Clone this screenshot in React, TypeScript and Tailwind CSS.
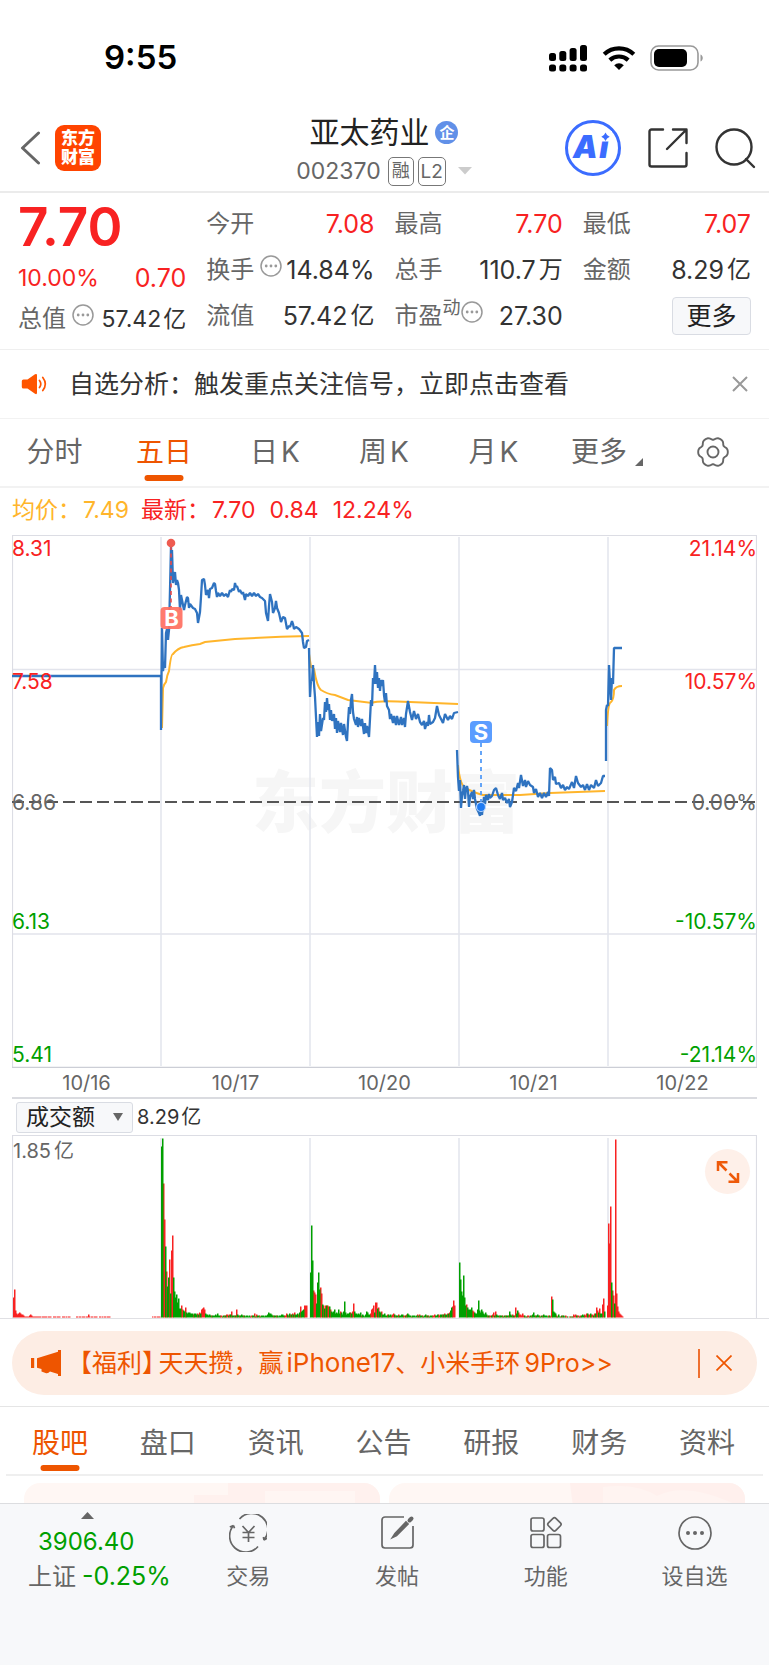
import React from "react";

const MORE = "shrink-0 text-[#999]";

function DotsCircle({ className = "" }: { className?: string }) {
  return (
    <svg viewBox="0 0 22 22" className={`h-[22px] w-[22px] ${MORE} ${className}`} fill="none" stroke="currentColor" strokeWidth="1.5">
      <circle cx="11" cy="11" r="10" />
      <g fill="currentColor" stroke="none">
        <circle cx="6.2" cy="11" r="1.4" />
        <circle cx="11" cy="11" r="1.4" />
        <circle cx="15.8" cy="11" r="1.4" />
      </g>
    </svg>
  );
}

function StatusBar() {
  return (
    <div className="flex h-[106px] items-center justify-between pt-[9px] pr-[65px] pl-[104px] text-black">
      <span className="text-[33px] leading-none font-semibold">9:55</span>
      <div className="flex items-center gap-[14px]">
        <svg viewBox="0 0 40 28" className="h-7 w-10" fill="currentColor">
          <rect x="1" y="9" width="7" height="8" rx="2.5" />
          <rect x="11.3" y="7" width="7" height="10" rx="2.5" />
          <rect x="21.6" y="4" width="7" height="13" rx="2.5" />
          <rect x="32" y="1" width="7" height="16" rx="2.5" />
          <rect x="1" y="20.5" width="7" height="7" rx="2.5" />
          <rect x="11.3" y="20.5" width="7" height="7" rx="2.5" />
          <rect x="21.6" y="20.5" width="7" height="7" rx="2.5" />
          <rect x="32" y="20.5" width="7" height="7" rx="2.5" />
        </svg>
        <svg viewBox="0 0 34 26" className="h-[26px] w-[34px]" fill="none" stroke="currentColor" strokeWidth="4.2">
          <path d="M2.2 9.3a21.5 21.5 0 0 1 29.6 0" />
          <path d="M7.8 15.1a13.5 13.5 0 0 1 18.4 0" />
          <path d="M17 25l-4.8-4.8a7 7 0 0 1 9.6 0z" fill="currentColor" stroke="none" />
        </svg>
        <svg viewBox="0 0 54 26" className="h-[26px] w-[54px]">
          <rect x="1" y="1" width="47" height="24" rx="7.5" fill="none" stroke="#999" strokeWidth="1.6" />
          <rect x="4" y="4" width="33" height="18" rx="5" fill="currentColor" />
          <path d="M50.5 9.5c3 1.200 3 5.800 0 7z" fill="#999" />
        </svg>
      </div>
    </div>
  );
}

function Header() {
  return (
    <header className="grid h-[87px] grid-cols-[1fr_auto_1fr] items-center border-b-2 border-[#ebebeb] pr-[13px] pb-[3px] pl-5">
      <div className="flex items-center gap-[14px]">
        <button aria-label="返回">
          <svg viewBox="0 0 21 34" className="h-[34px] w-[21px]" fill="none" stroke="#666" strokeWidth="3" strokeLinecap="round" strokeLinejoin="round">
            <path d="M18.5 2L2.5 17l16 15" />
          </svg>
        </button>
        <a href="#home" className="flex h-[46px] w-[46px] flex-col items-center justify-center rounded-[9px] bg-[#ff4400] text-[17px] leading-[19px] font-black text-white">
          <span>东方</span>
          <span>财富</span>
        </a>
      </div>
      <div className="flex flex-col items-center pt-[6px] pr-2">
        <h1 className="flex items-center gap-[6px] text-[30px] leading-[40px] text-[#222]">
          亚太药业
          <span className="flex h-[23px] w-[23px] items-center justify-center rounded-full bg-[#6190e8] text-[15px] leading-none font-bold text-white">企</span>
        </h1>
        <div className="flex h-[38px] items-center gap-1 text-[#666]">
          <span className="mr-[3px] text-[23px] leading-none">002370</span>
          <span className="flex h-[29px] w-[26px] items-center justify-center rounded-[5px] border border-[#777] text-[18px] leading-none">融</span>
          <span className="flex h-[29px] w-[28px] items-center justify-center rounded-[5px] border border-[#777] text-[19px] leading-none">L2</span>
          <svg viewBox="0 0 14 8" className="ml-2 h-2 w-[14px]" fill="#ccc">
            <path d="M0 0h14L7 7.5z" />
          </svg>
        </div>
      </div>
      <div className="flex items-center justify-end gap-[27px]">
        <button aria-label="Ai">
          <svg viewBox="0 0 56 56" className="h-14 w-14">
            <circle cx="28" cy="28" r="26.5" fill="#fff" stroke="#3b6cff" strokeWidth="3" />
            <text x="8" y="38" fill="#3b6cff" className="font-[Inter] text-[31px] font-black italic">
              A<tspan dx="1.5">i</tspan>
            </text>
            <path d="M34 11h13v10.500h-13z" fill="#fff" />
            <path d="M40.500 12.500q1 3 4.200 4.200q-3.200 1.200-4.200 4.200q-1-3-4.200-4.200q3.200-1.200 4.200-4.200z" fill="#3b6cff" />
          </svg>
        </button>
        <button aria-label="分享">
          <svg viewBox="0 0 40 40" className="h-10 w-10" fill="none" stroke="#333" strokeWidth="2.4" strokeLinecap="round" strokeLinejoin="round">
            <path d="M15 1.500H3.500a2 2 0 0 0-2 2v33a2 2 0 0 0 2 2h33a2 2 0 0 0 2-2V25" />
            <path d="M25 1.500h13.500V15M38 2L19 21" />
          </svg>
        </button>
        <button aria-label="搜索">
          <svg viewBox="0 0 41 41" className="h-[41px] w-[41px]" fill="none" stroke="#333" strokeWidth="2.4" strokeLinecap="round">
            <circle cx="19" cy="19" r="17.5" />
            <path d="M31 31l8 8" />
          </svg>
        </button>
      </div>
    </header>
  );
}

function Cell({ label, value, unit, red, info, sup }: { label: string; value: string; unit?: string; red?: boolean; info?: boolean; sup?: string }) {
  return (
    <div className="flex h-[46px] items-center justify-between whitespace-nowrap">
      <span className="flex items-center text-[24px] text-[#666]">
        {label}
        {sup && <span className="mb-4 text-[18px] leading-none">{sup}</span>}
        {info && <DotsCircle className={sup ? "mb-2" : "mb-2 ml-[6px]"} />}
      </span>
      <span className={`flex items-center gap-[3px] text-[25px] ${red ? "text-[#f82222]" : "text-[#333]"}`}>
        {value}
        {unit && <span className="text-[24px]">{unit}</span>}
      </span>
    </div>
  );
}

function Quote() {
  return (
    <section className="grid grid-cols-4 gap-x-5 border-b border-[#efefef] px-[18px] pt-2 pb-[10px]">
      <div className="whitespace-nowrap">
        <div className="flex h-[53px] items-center text-[53px] leading-none font-semibold text-[#f82222]">7.70</div>
        <div className="flex h-[48px] items-center justify-between text-[#f82222]">
          <span className="text-[23px]">10.00%</span>
          <span className="text-[25px]">0.70</span>
        </div>
        <div className="flex h-[34px] items-center justify-between text-[#333]">
          <span className="flex items-center text-[24px] text-[#666]">
            总值
            <DotsCircle className="mb-2 ml-[6px]" />
          </span>
          <span className="flex items-center gap-[2px] text-[23px]">
            57.42<span>亿</span>
          </span>
        </div>
      </div>
      <div>
        <Cell label="今开" value="7.08" red />
        <Cell label="换手" value="14.84%" info />
        <Cell label="流值" value="57.42" unit="亿" />
      </div>
      <div>
        <Cell label="最高" value="7.70" red />
        <Cell label="总手" value="110.7" unit="万" />
        <Cell label="市盈" value="27.30" sup="动" info />
      </div>
      <div>
        <Cell label="最低" value="7.07" red />
        <Cell label="金额" value="8.29" unit="亿" />
        <div className="flex h-[46px] items-center justify-end">
          <button className="h-[38px] w-[79px] rounded border border-[#d9dce3] bg-[#f7f8fa] text-[25px] leading-none text-[#222]">更多</button>
        </div>
      </div>
    </section>
  );
}

function Notice() {
  return (
    <div className="flex h-[69px] items-center border-b border-[#f2f2f2] pr-[21px] pl-[21px]">
      <svg viewBox="0 0 27 22" className="h-[22px] w-[27px]" fill="#ff5500">
        <path d="M2.5 6.500h4L14 1.300q2-1.200 2 1v17.500q0 2-2 1L6.500 15.500h-4Q.8 15.500.8 14V8q0-1.500 1.700-1.500z" />
        <path d="M18.500 7.500q2.600 3.500 0 7M21.800 4.500q5 6.500 0 13" fill="none" stroke="#ff5500" strokeWidth="1.7" strokeLinecap="round" />
      </svg>
      <a href="#analysis" className="ml-[21px] flex-1 text-[25px] text-[#333]">自选分析：触发重点关注信号，立即点击查看</a>
      <button aria-label="关闭">
        <svg viewBox="0 0 16 16" className="h-4 w-4" stroke="#999" strokeWidth="2">
          <path d="M1 1l14 14M15 1L1 15" />
        </svg>
      </button>
    </div>
  );
}

const gearPath =
  Array.from({ length: 73 }, (_, i) => {
    const a = (i * 5 * Math.PI) / 180;
    const r = 13.8 + 1.3 * Math.cos(6 * a) - 0.3 * Math.cos(12 * a);
    return `${i ? "L" : "M"}${(16 + r * Math.cos(a)).toFixed(2)} ${(16 + r * Math.sin(a)).toFixed(2)}`;
  }).join("") + "Z";

const periods = [
  { a: "分时", w: "w-[109px]" },
  { a: "五日", w: "w-[110px]", on: true },
  { a: "日", k: true, w: "w-[112px]" },
  { a: "周", k: true, w: "w-[106px]" },
  { a: "月", k: true, w: "w-[113px]" },
];

function Periods() {
  return (
    <nav className="flex h-[69px] items-center border-b-2 border-[#f2f2f2] text-[28px] text-[#666]">
      {periods.map((p) => (
        <button key={p.a} className={`relative flex h-full items-center justify-center gap-[3px] pb-[2px] ${p.w} ${p.on ? "text-[#ee5500]" : ""}`}>
          {p.a}
          {p.k && <span>K</span>}
          {p.on && <span className="absolute bottom-[5px] left-1/2 h-[6px] w-[39px] -translate-x-1/2 rounded-full bg-[#ee5500]" />}
        </button>
      ))}
      <button className="flex h-full w-[114px] items-center justify-center gap-[8px] pb-[2px]">
        更多
        <svg viewBox="0 0 8 8" className="mt-5 h-2 w-2" fill="#666">
          <path d="M8 0v8H0z" />
        </svg>
      </button>
      <button aria-label="设置" className="ml-[33px] pb-[2px]">
        <svg viewBox="0 0 32 32" className="h-8 w-8" fill="none" stroke="#666" strokeWidth="1.9" strokeLinejoin="round">
          <path d={gearPath} />
          <circle cx="16" cy="16" r="5.5" />
        </svg>
      </button>
    </nav>
  );
}

const priceDays = [
  "12,676 161,676 161,730 162,628 163,671 164,662 165,668 166,633 167,629 168,640 169,630 170,590 171,546 172,580 172,550 173,583 175,572 176,585 177,580 178,583 179,590 180,610 181,595 182,600 184,610 185,605 187,597 188,598 189,608 190,604 193,608 195,609 197,613 198,623 200,612 201,597 202,580 204,579 205,585 206,595 208,590 209,598 210,589 212,588 214,583 215,584 216,591 217,597 218,593 220,596 222,593 224,596 226,594 228,597 230,590 231,592 232,589 234,590 235,583 236,587 237,586 239,592 240,590 242,594 243,592 245,600 246,594 248,596 250,593 252,596 254,593 256,596 258,594 260,597 262,598 265,601 266,613 268,621 269,606 270,594 272,602 273,613 275,608 276,601 277,608 279,613 281,622 283,617 285,618 287,629 289,626 290,627 292,621 293,624 294,629 296,627 299,629 302,633 303,642 304,648 306,647 307,641 309,640",
  "309,648 310,697 311,680 312,681 313,665 314,684 315,697 317,737 318,722 319,736 320,714 321,731 323,718 324,720 325,702 326,712 327,698 328,710 329,704 330,720 331,710 332,721 334,714 335,729 336,718 337,733 338,721 340,732 341,723 343,735 344,724 346,737 347,741 348,722 349,707 350,714 351,700 352,694 353,712 354,719 356,725 357,717 358,727 359,718 361,726 362,719 364,734 365,723 366,733 367,726 369,737 370,719 371,700 372,706 373,678 374,684 375,665 376,684 377,672 378,688 379,678 380,691 381,680 382,686 383,680 384,695 385,702 386,693 387,706 389,710 390,719 391,714 393,723 394,716 396,725 397,716 399,725 401,717 402,725 404,718 405,727 406,714 408,701 410,712 412,720 414,711 416,719 418,714 420,722 422,725 424,721 425,729 427,722 428,726 429,715 430,724 433,722 435,718 437,706 439,715 441,719 443,723 445,714 448,720 450,716 452,719 454,713 458,712",
  "457,750 458,777 459,791 460,780 461,808 462,796 463,791 464,785 465,799 466,789 467,786 468,791 469,807 470,797 472,792 473,799 474,790 475,799 477,809 479,813 480,816 481,806 482,815 483,805 484,797 485,804 486,795 488,800 489,794 490,798 492,796 494,790 496,788 498,795 500,799 502,793 503,800 505,798 507,803 509,799 510,807 512,802 513,795 514,788 516,791 518,783 519,788 521,775 523,786 525,780 526,787 528,781 530,785 533,787 534,793 536,789 538,797 540,793 542,798 544,793 546,797 548,792 549,796 550,768 552,770 553,780 555,777 556,784 559,783 561,788 563,785 565,790 567,787 569,789 572,782 574,788 576,776 578,783 581,787 583,785 585,790 587,784 589,790 591,785 594,788 596,780 598,786 601,783 603,776 605,776",
  "606,761 606,710 607,705 608,706 609,665 610,684 611,700 612,678 613,684 614,648 622,648",
];

const averageDays = [
  "M162 728L163 688Q164 684 166 682Q167 675 169 671Q171 654 173 654Q178 648 184 647Q192 645 200 644L205 642L235 639Q270 637 309 636",
  "M309 654L311 667L314 669Q317 687 321 690Q327 694 335 695L348 700L372 703Q376 700 410 702L458 704",
  "M458 765Q460 787 467 789Q478 794 483 795L520 795L550 793L605 791",
  "M607 726Q608 703 611 702Q614 699 614 690Q616 686 622 686",
];

const dayLines = [161, 310, 459, 608];

const yLabels = [
  { p: "8.31", r: "21.14%", c: "text-[#f82222]", top: "top-[2.5%]" },
  { p: "7.58", r: "10.57%", c: "text-[#f82222]", top: "top-[27.4%]" },
  { p: "6.86", r: "0.00%", c: "text-[#666]", top: "top-[50%]" },
  { p: "6.13", r: "-10.57%", c: "text-[#009f00]", top: "top-[72.4%]" },
  { p: "5.41", r: "-21.14%", c: "text-[#009f00]", top: "top-[97.4%]" },
];

function PriceChart() {
  return (
    <div className="px-3">
      <div className="relative">
        <svg viewBox="12 535 745 533" className="block h-auto w-full">
          <text x="386" y="827" textAnchor="middle" fill="#f6f6f6" className="font-['Noto_Sans_CJK_SC'] text-[67px] font-black">东方财富</text>
          <g stroke="#e2e4ec" strokeWidth="1.5">
            <path d="M12 669.500H757M12 934H757" />
            {dayLines.map((x) => (
              <path key={x} d={`M${x} 537V1066`} />
            ))}
          </g>
          <path d="M12.500 1068V535.500H756.500V1068" fill="none" stroke="#dcdde4" strokeWidth="1.2" />
          <path d="M12 1067.500H757" stroke="#ccced6" strokeWidth="1.5" />
          <path d="M12 802H757" stroke="#555" strokeWidth="2" strokeDasharray="12 5" />
          <g fill="none" stroke="#ffb52b" strokeWidth="2">
            {averageDays.map((d) => (
              <path key={d} d={d} />
            ))}
          </g>
          <g fill="none" stroke="#2f73c0" strokeWidth="2.3" strokeLinejoin="bevel">
            {priceDays.map((d) => (
              <polyline key={d} points={d} />
            ))}
          </g>
          <path d="M171 546V608" stroke="#e84a4a" strokeWidth="1.6" strokeDasharray="4 3.5" />
          <circle cx="171" cy="543" r="4.3" fill="#ee5b50" />
          <rect x="160.500" y="607" width="22" height="22" rx="4" fill="#ff6f61" fillOpacity=".92" />
          <text x="171.500" y="626" textAnchor="middle" fill="#fff" className="font-[Inter] text-[22px] font-bold">B</text>
          <path d="M481 743V804" stroke="#559cf7" strokeWidth="1.8" strokeDasharray="4 4" />
          <rect x="470" y="721" width="22" height="22" rx="4" fill="#5b9dff" />
          <text x="481" y="740" textAnchor="middle" fill="#fff" className="font-[Inter] text-[22px] font-bold">S</text>
          <circle cx="481" cy="807" r="4.5" fill="#1f7bf2" stroke="#b5d5ff" strokeWidth="1.2" />
        </svg>
        {yLabels.map((l) => (
          <div key={l.p} className={`absolute inset-x-0 flex -translate-y-1/2 justify-between text-[21px] leading-none ${l.top} ${l.c}`}>
            <span>{l.p}</span>
            <span>{l.r}</span>
          </div>
        ))}
      </div>
      <div className="grid h-[31px] grid-cols-5 items-center border-b-2 border-[#dadbe0] text-center text-[20px] text-[#666]">
        {["10/16", "10/17", "10/20", "10/21", "10/22"].map((d) => (
          <span key={d}>{d}</span>
        ))}
      </div>
    </div>
  );
}

// Each entry: first x, then one bar per pixel; a leading "g" marks a falling minute.
const volumeRuns: [number, string][] = [
  [13, "20 28 7 4 3 4 5 4 3 3 2 1 1 1 1 1 2 3 2 1 1 1"],
  [35, "1 1 1 1 1 1 0 1 1 1 1 1 0 1 1 1 0 0 1 1 1 0 1 1 1 0 0 1 1 1 0 1 0 1 1"],
  [76, "1 1 0 1 1 0 1 1 1 0 1 1 3 1 0 1 1 0 1 1 1 0 0 1 1 0 1 0 1 1 0 1 1 1"],
  [152, "1 0 1 1 0 1 1 1"],
  [161, "g171 g179 134 98 g71 46 g31 g40 58 g24 67 82 g40 g26 g20 g23 g15 g19 g9 g9 12 8 g7 g6 10 g5 g4 g5 g5 g4 g4 g4 3 g4 g4 g3 4 g3 5 g4 8 9 10 8 g4 g3 g3 g2 g3 g2 2 g2 g2 g2 g3 g2 g4 g2 g2 2 2 g1 g2 2 g2 3 3 g2 3 g3 6 g2 g2 2 g2 8 g3 g2 2 g2 g3 g2 2 g2 g1 g2 g2 g1 g2 1 2 g2 g2 4 g1 3 g2 g2 2 g1 g2 g2 g2 g1 g2 g2 g3 g5 g4 g4 g3 g2 2 g2 g2 2 g2 g1 g2 g2 g3 g3 g2 2 2 4 g3 2 g4 3 g3 4 g3 5 g3 g3 g4 3 g5 11 g6 g7 g8 12 12 12"],
  [310, "g45 g92 g57 27 25 23 g14 g35 g45 g28 30 24 g13 12 g9 12 g12 12 11 g11 8 g6 g5 g6 g8 g4 g5 g4 g8 g4 6 g5 g3 g6 g16 g5 g3 g4 g4 g5 5 g4 6 14 g6 g4 g4 g3 g4 g3 g5 2 g3 g2 g1 g3 g6 g5 g3 g3 4 8 9 12 g5 15 15 g9 10 g6 g5 6 g3 g3 g4 g2 g2 3 g3 g2 g3 2 3 4 g3 2 g2 g2 3 g2 g2 g3 g3 2 2 g2 3 g4 g3 g2 g2 1 g2 g2 g2 g1 g2 3 g2 3 g2 g2 2 g1 g2 g3 2 g2 2 g1 g2 g2 2 2 3 g2 g2 g3 3 2 g3 g3 3 g3 4 g3 g3 4 g4 5 g7 g10 11 17 12"],
  [459, "g55 g38 g26 g22 g42 g20 g12 13 g10 g8 g8 g8 g10 7 6 g5 g4 g4 g8 g17 g7 g5 g8 g6 g4 g3 g5 g3 2 g2 2 2 g2 3 5 g2 6 g3 g2 g2 2 g2 g2 2 g1 g2 2 g2 g2 2 g6 g3 g2 3 g2 2 10 g4 g7 5 3 3 2 4 2 g2 1 g1 2 2 g1 g2 2 g3 g5 g2 2 g2 g3 g2 2 g1 g2 2 g3 g2 g2 g2 g1 2 g2 1 21 g18 g6 g5 g4 2 g1 g3 g1 1 g2 2 g2 g1 2 1 g1 0 1 g1 1 g1 3 2 3 g2 2 2 g1 2 g2 g3 g2 3 2 4 g4 3 3 g4 3 3 g2 4 g4 10 7 g5 9 g4 g4 13 19 g6"],
  [607, "12 94 74 111 g35 27 22 g14 178 24 11 6 4 3 2 1"],
];

const volumeBars = volumeRuns.flatMap(([x0, run]) =>
  run.split(" ").map((v, i) => ({ x: x0 + i, down: v[0] === "g", h: Number(v.replace("g", "")) })),
);

const barPath = (down: boolean) =>
  volumeBars.filter((b) => b.down === down && b.h > 0).map((b) => `M${b.x} ${1317.5 - b.h}h1.5V1317.5h-1.5z`).join("");

function VolumeChart() {
  return (
    <div className="border-b border-[#e0e0e4]">
      <div className="flex h-[36px] items-center px-4">
        <div className="relative">
          <select aria-label="指标" className="block h-[31px] w-[117px] appearance-none rounded-[3px] border border-[#d9dce3] bg-[#f7f8fa] pl-[9px] text-[23px] leading-none text-[#222]">
            <option>成交额</option>
          </select>
          <svg viewBox="0 0 10 8" className="pointer-events-none absolute top-[11px] right-[10px] h-2 w-[10px]" fill="#666">
            <path d="M0 0h10L5 8z" />
          </svg>
        </div>
        <span className="ml-1 flex items-center gap-[2px] text-[20px] leading-none text-[#333]">
          8.29<span>亿</span>
        </span>
      </div>
      <div className="relative px-3">
        <svg viewBox="12 1135 745 183" className="block h-auto w-full">
          <path d="M12.500 1318V1135.500H756.500V1318" fill="none" stroke="#dcdde4" strokeWidth="1.2" />
          {dayLines.map((x) => (
            <path key={x} d={`M${x} 1138V1318`} stroke="#e2e4ec" strokeWidth="1.5" />
          ))}
          <path d={barPath(false)} fill="#f82222" />
          <path d={barPath(true)} fill="#009f00" />
        </svg>
        <span className="absolute top-[6px] left-[13px] flex items-center gap-[3px] text-[20px] leading-[20px] text-[#666]">
          1.85<span>亿</span>
        </span>
        <button aria-label="全屏" className="absolute top-[14px] right-[19px] flex h-[45px] w-[45px] items-center justify-center rounded-full bg-[#fef0e9]">
          <svg viewBox="0 0 24 24" className="h-6 w-6" fill="none" stroke="#ee5a0a" strokeWidth="2.5">
            <path d="M2 11V2.200h9.500M2 2l8.500 8.500M22 13v8.800h-9.500M22 22l-8.500-8.500" />
          </svg>
        </button>
      </div>
    </div>
  );
}

function Banner() {
  return (
    <div className="border-b border-[#e5e5e5] px-3 pt-3 pb-[11px]">
      <div className="flex h-16 items-center rounded-full bg-[#fdede4] pr-6 pl-[19px] text-[#ee5500]">
        <svg viewBox="0 0 30 26" className="h-[26px] w-[30px]" fill="currentColor">
          <path d="M0 8h3.200v10H0zM6 8.200L27 1.800V0h3v26h-3v-2L19 21.500Q17 24 14.500 23l-4-1.500V19L6 17.800z" />
        </svg>
        <a href="#promo" className="ml-[6px] flex flex-1 items-center text-[25px] whitespace-nowrap">
          【福利<span className="mr-1 [font-feature-settings:'halt']">】</span>天天攒，赢<span className="ml-[3px] text-[26px]">iPhone17</span>、小米手环<span className="ml-1 text-[25px]">9Pro&gt;&gt;</span>
        </a>
        <span className="mr-4 h-[29px] w-[2px] bg-[#ee7030]" />
        <button aria-label="关闭活动" className="pr-[1px]">
          <svg viewBox="0 0 16 16" className="h-4 w-4" stroke="currentColor" strokeWidth="1.7">
            <path d="M.5.5l15 15M15.500.5l-15 15" />
          </svg>
        </button>
      </div>
    </div>
  );
}

function Sections() {
  return (
    <nav className="mx-[6px] grid h-[69px] grid-cols-7 border-b-2 border-[#efefef] pr-[2px] text-[28px] text-[#666]">
      {["股吧", "盘口", "资讯", "公告", "研报", "财务", "资料"].map((t, i) => (
        <a key={t} href={`#tab-${i}`} className={`relative flex items-center justify-center pt-1 ${i === 0 ? "text-[#ee5500]" : ""}`}>
          {t}
          {i === 0 && <span className="absolute bottom-[3px] left-1/2 h-[6px] w-[39px] -translate-x-1/2 rounded-full bg-[#ee5500]" />}
        </a>
      ))}
    </nav>
  );
}

function Cards() {
  return (
    <div className="flex h-[27px] gap-[9px] overflow-hidden px-6 pt-[7px]">
      <div className="h-10 flex-1 overflow-hidden rounded-2xl bg-[#fff7f4]">
        <svg viewBox="0 0 356 40" className="h-10 w-full" preserveAspectRatio="none">
          <path d="M170 12h34V0h152v40H170z" fill="#fff1ee" />
          <path d="M241 8h90v32h-90z" fill="#fff6f3" />
        </svg>
      </div>
      <div className="h-10 flex-1 overflow-hidden rounded-2xl bg-[#fff7f4]">
        <svg viewBox="0 0 356 40" className="h-10 w-full" preserveAspectRatio="none">
          <path d="M181 0h175v40H186z" fill="#fff0ed" />
          <path d="M214 40V4q34-4 54 9 30-16 86 12v15z" fill="#fff4f1" />
        </svg>
      </div>
    </div>
  );
}

const actionIcons: { label: string; icon: React.ReactNode }[] = [
  {
    label: "交易",
    icon: (
      <>
        <path d="M10.500 5A16 16 0 0 1 35 26l3-1.800M35 26l-.6-3M29 32.500A16 16 0 0 1 4.500 11.500L.8 13M4.500 11.500l1 2.800" />
        <path d="M13.500 12l6 6.500 6-6.500M19.500 18.500V28M13.500 18.500h12M13.500 23.500h12" />
      </>
    ),
  },
  {
    label: "发帖",
    icon: (
      <>
        <path d="M26 3H7a3 3 0 0 0-3 3v25a3 3 0 0 0 3 3h25a3 3 0 0 0 3-3V12" />
        <path d="M14.500 23.500L17 19.500L28 8l2 2L18.500 21.500z" fill="currentColor" />
        <path d="M31.500 6.500l2-2" strokeWidth="4" strokeLinecap="round" />
      </>
    ),
  },
  {
    label: "功能",
    icon: (
      <>
        <rect x="4" y="4" width="13" height="13" rx="2" />
        <rect x="4" y="20.500" width="13" height="13" rx="2" />
        <rect x="20.500" y="20.500" width="13" height="13" rx="2" />
        <rect x="22" y="5" width="10.500" height="10.500" rx="2" transform="rotate(45 27.250 10.500)" />
      </>
    ),
  },
  {
    label: "设自选",
    icon: (
      <>
        <circle cx="19" cy="19" r="16" />
        <g fill="currentColor" stroke="none">
          <circle cx="12" cy="19" r="2" />
          <circle cx="19" cy="19" r="2" />
          <circle cx="26" cy="19" r="2" />
        </g>
      </>
    ),
  },
];

function BottomBar() {
  return (
    <footer className="flex h-[162px] border-t border-[#dcdde0] bg-[#f7f8fa]">
      <a href="#index" className="flex w-[174px] flex-col pt-2 pl-[28px] text-[24px] whitespace-nowrap text-[#009f00]">
        <svg viewBox="0 0 13 7" className="ml-[53px] h-[7px] w-[13px]" fill="#666">
          <path d="M0 7L6.500 0 13 7z" />
        </svg>
        <span className="mt-[6px] ml-[10px] leading-[34px]">3906.40</span>
        <span className="flex items-center gap-[6px] leading-[35px]">
          <span className="text-[#666]">上证</span>
          <span className="text-[25px]">-0.25%</span>
        </span>
      </a>
      <div className="grid flex-1 grid-cols-4">
        {actionIcons.map((a) => (
          <button key={a.label} className="flex flex-col items-center self-start pt-[10px] text-[22px] leading-[34px] text-[#666]">
            <svg viewBox="0 0 38 38" className="h-[38px] w-[38px]" fill="none" stroke="currentColor" strokeWidth="1.7">
              {a.icon}
            </svg>
            <span className="mt-[7px]">{a.label}</span>
          </button>
        ))}
      </div>
    </footer>
  );
}

export default function App() {
  return (
    <main className="w-full bg-white font-[Inter,'Noto_Sans_CJK_SC',sans-serif] leading-none font-normal">
      <StatusBar />
      <Header />
      <Quote />
      <Notice />
      <Periods />
      <div className="flex h-[47px] items-center pb-[2px] pl-3 text-[23px] whitespace-nowrap text-[#f82222]">
        <span className="flex gap-[2px] text-[#ffb52b]">
          <span>均价：</span>7.49
        </span>
        <span className="ml-[12px] flex gap-[2px]">
          <span>最新：</span>7.70
        </span>
        <span className="ml-[14px]">0.84</span>
        <span className="ml-[14px]">12.24%</span>
      </div>
      <PriceChart />
      <VolumeChart />
      <Banner />
      <Sections />
      <Cards />
      <BottomBar />
    </main>
  );
}
